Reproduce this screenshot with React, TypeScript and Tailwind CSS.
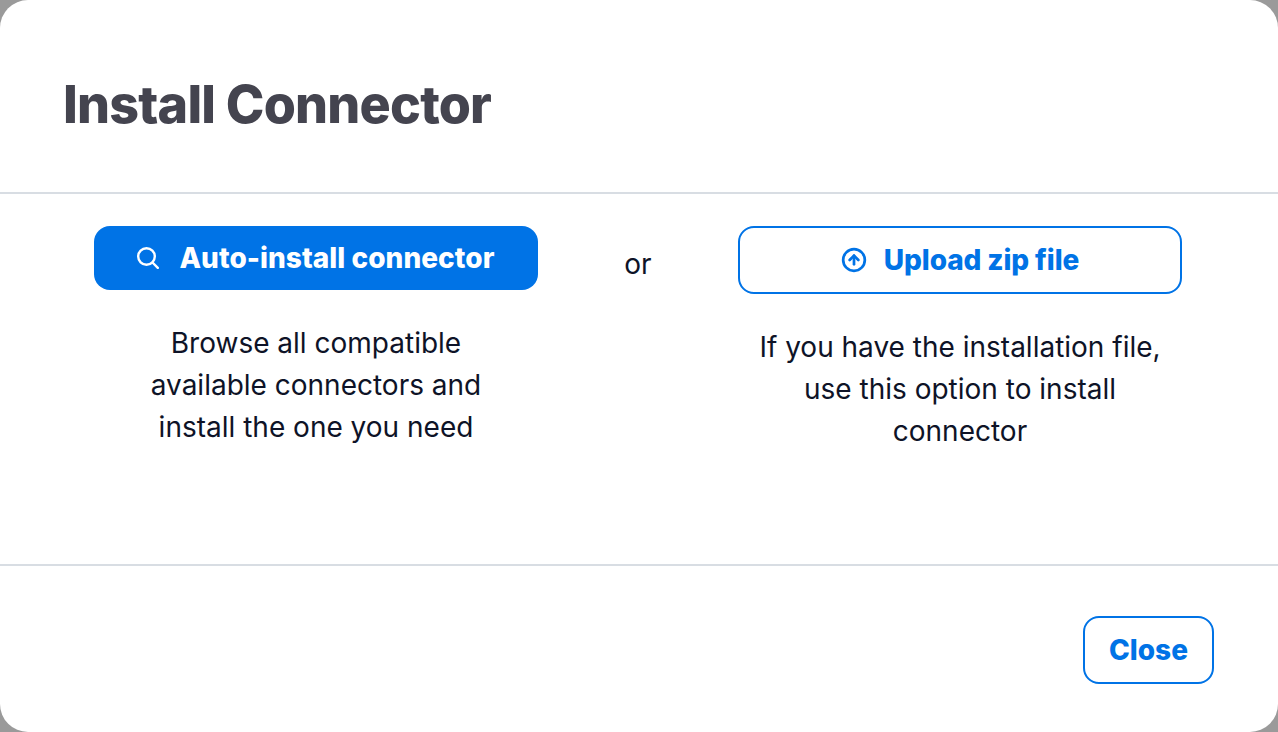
import React from 'react'
import { CircleArrowUp } from 'lucide-react'

const font = "font-['Inter','Liberation_Sans',sans-serif]"

function SearchIcon() {
  return (
    <svg width={22} height={22} viewBox="0 0 22 22" fill="none" stroke="currentColor" strokeWidth={2.4} strokeLinecap="round">
      <circle cx={9.5} cy={9.5} r={8.3} />
      <line x1={15.5} y1={15.5} x2={20.8} y2={20.8} />
    </svg>
  )
}

export default function App() {
  return (
    <div className={`h-[732px] w-[1278px] overflow-hidden bg-[#9a9a9a] ${font}`}>
      <div className="flex h-full flex-col rounded-[28px] bg-white">
        <div className="flex h-[194px] items-center border-b-2 border-[#d8dde3] pl-[63px] pt-[18px]">
          <h1 className="text-[52px] font-extrabold leading-none tracking-[-0.8px] text-[#44444f]">Install Connector</h1>
        </div>

        <div className="flex h-[372px] items-start border-b-2 border-[#d8dde3] pl-[94px] pt-[32px]">
          <div className="flex w-[444px] flex-col items-center">
            <button className="flex h-[64px] w-full items-center justify-center gap-[20px] rounded-[16px] bg-[#0073e6] text-[28px] font-extrabold tracking-[0.05px] text-white">
              <SearchIcon />
              Auto-install connector
            </button>
            <p className="mt-[32px] w-[340px] text-center text-[28px] leading-[42px] text-[#0e1327]">
              Browse all compatible available connectors and install the one you need
            </p>
          </div>

          <div className="mt-[17px] flex w-[200px] justify-center text-[28px] leading-[42px] text-[#0e1327]">or</div>

          <div className="flex w-[444px] flex-col items-center">
            <button className="flex h-[68px] w-full items-center justify-center gap-[17px] rounded-[16px] border-2 border-[#0073e6] bg-white text-[28px] font-extrabold tracking-[-0.1px] text-[#0073e6]">
              <CircleArrowUp size={26} strokeWidth={2.5} />
              Upload zip file
            </button>
            <p className="mt-[32px] w-[420px] text-center text-[28px] leading-[42px] text-[#0e1327]">
              If you have the installation file, use this option to install connector
            </p>
          </div>
        </div>

        <div className="flex flex-1 items-start justify-end pr-[64px] pt-[50px]">
          <button className="h-[68px] w-[131px] rounded-[16px] border-2 border-[#0073e6] bg-white text-[28px] font-extrabold text-[#0073e6]">
            Close
          </button>
        </div>
      </div>
    </div>
  )
}
